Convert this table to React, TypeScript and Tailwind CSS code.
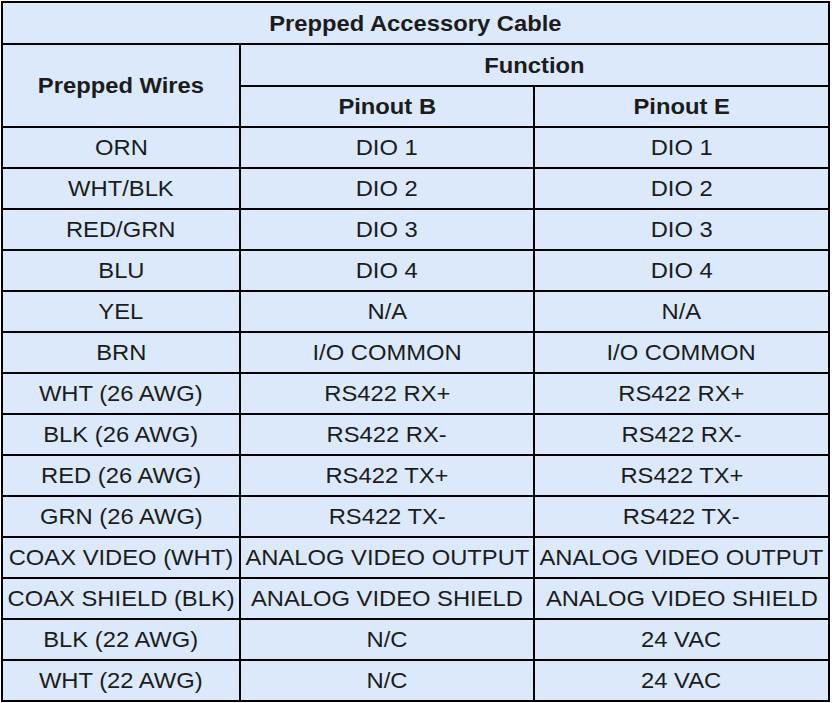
const rows: [string, string, string][] = [
  ["ORN", "DIO 1", "DIO 1"],
  ["WHT/BLK", "DIO 2", "DIO 2"],
  ["RED/GRN", "DIO 3", "DIO 3"],
  ["BLU", "DIO 4", "DIO 4"],
  ["YEL", "N/A", "N/A"],
  ["BRN", "I/O COMMON", "I/O COMMON"],
  ["WHT (26 AWG)", "RS422 RX+", "RS422 RX+"],
  ["BLK (26 AWG)", "RS422 RX-", "RS422 RX-"],
  ["RED (26 AWG)", "RS422 TX+", "RS422 TX+"],
  ["GRN (26 AWG)", "RS422 TX-", "RS422 TX-"],
  ["COAX VIDEO (WHT)", "ANALOG VIDEO OUTPUT", "ANALOG VIDEO OUTPUT"],
  ["COAX SHIELD (BLK)", "ANALOG VIDEO SHIELD", "ANALOG VIDEO SHIELD"],
  ["BLK (22 AWG)", "N/C", "24 VAC"],
  ["WHT (22 AWG)", "N/C", "24 VAC"],
];

// the source text is slightly wider than plain Arial, so stretch it a bit
function T({ children }: { children: string }) {
  return <span className="inline-block scale-x-[1.08]">{children}</span>;
}

export default function App() {
  const cell = "border-2 border-black p-0 text-center align-middle whitespace-nowrap overflow-visible";
  return (
    <div className="bg-white w-[832px] h-[703px] pt-[1px] pl-[1px]" style={{ fontFamily: '"Liberation Sans", Arial, sans-serif' }}>
      <table className="border-collapse bg-[#dbe9fb] text-[22px] text-[#1c1c1c] table-fixed w-[827px]">
        <colgroup>
          <col className="w-[238px]" />
          <col className="w-[294px]" />
          <col className="w-[295px]" />
        </colgroup>
        <tbody>
          <tr className="h-[42px]">
            <th colSpan={3} className={`${cell} font-bold`}><T>Prepped Accessory Cable</T></th>
          </tr>
          <tr className="h-[42px]">
            <th rowSpan={2} className={`${cell} font-bold`}><T>Prepped Wires</T></th>
            <th colSpan={2} className={`${cell} font-bold`}><T>Function</T></th>
          </tr>
          <tr className="h-[41px]">
            <th className={`${cell} font-bold`}><T>Pinout B</T></th>
            <th className={`${cell} font-bold`}><T>Pinout E</T></th>
          </tr>
          {rows.map((r, i) => (
            <tr key={i} className="h-[41px]">
              <td className={cell}><T>{r[0]}</T></td>
              <td className={cell}><T>{r[1]}</T></td>
              <td className={cell}><T>{r[2]}</T></td>
            </tr>
          ))}
        </tbody>
      </table>
    </div>
  );
}
